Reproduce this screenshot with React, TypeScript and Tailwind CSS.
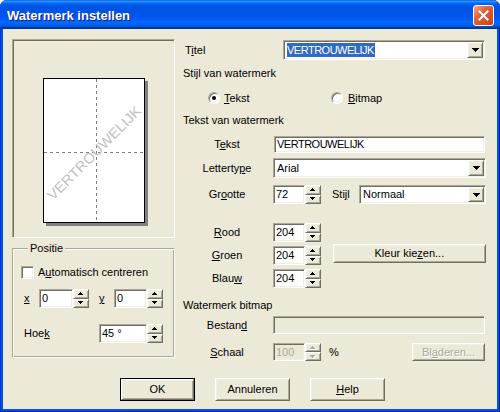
import React from "react";

const sunken =
  "border border-t-[#ACA899] border-l-[#ACA899] border-b-white border-r-white shadow-[inset_1px_1px_0_#716F64,inset_-1px_-1px_0_#F1EFE2]";
const raised =
  "border border-t-white border-l-white border-b-[#716F64] border-r-[#716F64] shadow-[inset_1px_1px_0_#F1EFE2,inset_-1px_-1px_0_#ACA899]";
const grayText = "text-[#ACA899] [text-shadow:1px_1px_0_#ffffff]";

function U({ children }) {
  return <span className="underline decoration-1 underline-offset-[1px]">{children}</span>;
}

function Tri({ rows, w, h, disabled = false }) {
  return (
    <svg width={w} height={h} viewBox={`0 0 ${w} ${h}`} shapeRendering="crispEdges">
      {disabled &&
        rows.map(([x, y, rw]) => (
          <rect key={"s" + y} x={x + 1} y={y + 1} width={rw} height={1} fill="#ffffff" />
        ))}
      {rows.map(([x, y, rw]) => (
        <rect key={y} x={x} y={y} width={rw} height={1} fill={disabled ? "#ACA899" : "#000000"} />
      ))}
    </svg>
  );
}

const upRows = [
  [2, 0, 1],
  [1, 1, 3],
  [0, 2, 5],
];
const downRows = [
  [0, 0, 5],
  [1, 1, 3],
  [2, 2, 1],
];
const comboRows = [
  [0, 0, 7],
  [1, 1, 5],
  [2, 2, 3],
  [3, 3, 1],
];

function Edit({ className = "", disabled = false, children = null }) {
  return (
    <div
      className={`${sunken} flex items-center pl-[2px] overflow-hidden whitespace-nowrap ${
        disabled ? "bg-[#ECE9D8] text-[#ACA899]" : "bg-white"
      } ${className}`}
    >
      {children}
    </div>
  );
}

function Spin({ disabled = false }) {
  return (
    <div className="flex flex-col w-[16px] h-full">
      <div className={`${raised} flex-1 bg-[#ECE9D8] flex items-center justify-center`}>
        <Tri rows={upRows} w={6} h={4} disabled={disabled} />
      </div>
      <div className={`${raised} flex-1 bg-[#ECE9D8] flex items-center justify-center`}>
        <Tri rows={downRows} w={6} h={4} disabled={disabled} />
      </div>
    </div>
  );
}

function Combo({ className = "", children }) {
  return (
    <div className={`${sunken} bg-white flex p-[1px] ${className}`}>
      <div className="flex-1 flex items-center pl-[2px] whitespace-nowrap overflow-hidden">{children}</div>
      <div className={`${raised} w-[16px] bg-[#ECE9D8] flex items-center justify-center`}>
        <Tri rows={comboRows} w={7} h={4} />
      </div>
    </div>
  );
}

function Btn({ className = "", children, def = false, disabled = false }) {
  const inner = (
    <div
      className={`${raised} w-full h-full bg-[#ECE9D8] flex items-center justify-center ${
        disabled ? grayText : ""
      }`}
    >
      {children}
    </div>
  );
  if (def) return <div className={`border border-black ${className}`}>{inner}</div>;
  return <div className={className}>{inner}</div>;
}

function Radio({ checked = false }) {
  return (
    <div
      className={`w-[12px] h-[12px] rounded-full bg-white ${sunken} flex items-center justify-center`}
    >
      {checked && <div className="w-[4px] h-[4px] rounded-full bg-black" />}
    </div>
  );
}

function Label({ children }) {
  return <div className="w-[88px] text-center">{children}</div>;
}

function Preview() {
  return (
    <div className="mt-[10px] h-[199px] border border-t-[#ACA899] border-l-[#ACA899] border-b-white border-r-white shadow-[inset_1px_1px_0_#716F64] flex justify-center pt-[38px]">
      <div className="w-[102px] h-[145px] border border-black bg-white shadow-[3px_3px_0_#808080]">
        <svg width="100" height="143" viewBox="0 0 100 143">
          <line x1="52.5" y1="0" x2="52.5" y2="143" stroke="#808080" strokeDasharray="3 3" />
          <line x1="0" y1="73.5" x2="100" y2="73.5" stroke="#808080" strokeDasharray="3 3" />
          <text
            x="50"
            y="74"
            transform="rotate(-45 50 74)"
            textAnchor="middle"
            dominantBaseline="central"
            fontFamily="Liberation Sans, Arial, sans-serif"
            fontSize="14"
            fill="#C0C0C0"
            textLength="126"
            lengthAdjust="spacingAndGlyphs"
          >
            VERTROUWELIJK
          </text>
        </svg>
      </div>
    </div>
  );
}

function Positie() {
  return (
    <fieldset className="mt-[4px] h-[116px] border border-t-[#ACA899] border-l-[#ACA899] border-r-white border-b-white shadow-[inset_1px_1px_0_#ffffff,inset_-1px_-1px_0_#ACA899] pl-[8px]">
      <legend className="ml-[7px] px-[2px] bg-[#ECE9D8] leading-[13px]">Positie</legend>
      <div className="mt-[11px] flex items-center gap-[4px] h-[13px]">
        <div className={`w-[13px] h-[13px] bg-white ${sunken}`} />
        <span>
          A<U>u</U>tomatisch centreren
        </span>
      </div>
      <div className="mt-[10px] flex items-center h-[19px]">
        <div className="ml-[3px] w-[15px]">
          <U>x</U>
        </div>
        <Edit className="w-[34px] h-full">0</Edit>
        <Spin />
        <div className="ml-[10px] w-[15px]">
          <U>y</U>
        </div>
        <Edit className="w-[33px] h-full">0</Edit>
        <Spin />
      </div>
      <div className="mt-[16px] flex items-center h-[19px]">
        <div className="ml-[3px] w-[75px]">
          Hoe<U>k</U>
        </div>
        <Edit className="w-[48px] h-full">45 °</Edit>
        <Spin />
      </div>
    </fieldset>
  );
}

function RightCol() {
  return (
    <div className="ml-[8px] w-[303px] flex flex-col">
      <div className="mt-[11px] h-[20px] flex items-center">
        <div className="pl-[2px] w-[100px]">
          T<U>i</U>tel
        </div>
        <Combo className="w-[202px] h-full">
          <span className="bg-[#316AC5] text-white h-[14px] leading-[14px] pr-[1px] tracking-[-0.5px]">
            VERTROUWELIJK
          </span>
        </Combo>
      </div>
      <div className="mt-[6px] h-[14px] flex items-center">Stijl van watermerk</div>
      <div className="mt-[11px] h-[14px] flex items-center pl-[25px]">
        <div className="w-[123px] flex items-center gap-[4px]">
          <Radio checked />
          <span>
            <U>T</U>ekst
          </span>
        </div>
        <div className="flex items-center gap-[5px]">
          <Radio />
          <span>
            <U>B</U>itmap
          </span>
        </div>
      </div>
      <div className="mt-[8px] h-[14px] flex items-center">Tekst van watermerk</div>
      <div className="mt-[9px] h-[17px] flex items-center">
        <Label>
          T<U>e</U>kst
        </Label>
        <Edit className="ml-[3px] w-[211px] h-full tracking-[-0.5px]">VERTROUWELIJK</Edit>
      </div>
      <div className="mt-[5px] h-[20px] flex items-center">
        <Label>
          Letterty<U>p</U>e
        </Label>
        <Combo className="ml-[2px] w-[213px] h-full">Arial</Combo>
      </div>
      <div className="mt-[7px] h-[19px] flex items-center">
        <Label>
          Gr<U>o</U>otte
        </Label>
        <Edit className="ml-[2px] w-[32px] h-full">72</Edit>
        <Spin />
        <div className="ml-[11px] w-[27px]">
          Sti<U>j</U>l
        </div>
        <Combo className="w-[127px] h-full">Normaal</Combo>
      </div>
      <div className="mt-[19px] h-[19px] flex items-center">
        <Label>
          <U>R</U>ood
        </Label>
        <Edit className="ml-[2px] w-[32px] h-full">204</Edit>
        <Spin />
      </div>
      <div className="mt-[4px] h-[19px] flex items-start">
        <div className="h-full flex items-center">
          <Label>
            <U>G</U>roen
          </Label>
        </div>
        <Edit className="ml-[2px] w-[32px] h-full">204</Edit>
        <Spin />
        <Btn className="ml-[12px] -mt-[2px] w-[154px] h-[19px]">
          Kleur kie<U>z</U>en...
        </Btn>
      </div>
      <div className="mt-[4px] h-[19px] flex items-center">
        <Label>
          Blau<U>w</U>
        </Label>
        <Edit className="ml-[2px] w-[32px] h-full">204</Edit>
        <Spin />
      </div>
      <div className="mt-[10px] h-[14px] flex items-center">Watermerk bitmap</div>
      <div className="mt-[4px] h-[18px] flex items-center">
        <Label>
          Bestan<U>d</U>
        </Label>
        <Edit className="ml-[2px] w-[212px] h-full" disabled />
      </div>
      <div className="mt-[9px] h-[18px] flex items-center">
        <Label>
          <U>S</U>chaal
        </Label>
        <Edit className="ml-[2px] w-[32px] h-full" disabled>
          100
        </Edit>
        <Spin disabled />
        <div className="ml-[8px]">%</div>
        <Btn className="ml-auto mr-[1px] w-[73px] h-full" disabled>
          Bl<U>a</U>deren...
        </Btn>
      </div>
    </div>
  );
}

function CloseButton() {
  return (
    <div className="ml-auto mr-[6px] w-[21px] h-[21px] rounded-[3px] border border-white bg-[linear-gradient(135deg,#F2A48A_0%,#E0603E_40%,#C8401C_100%)] flex items-center justify-center">
      <svg width="11" height="11" viewBox="0 0 11 11">
        <path d="M1.5 1.5 L9.5 9.5 M9.5 1.5 L1.5 9.5" stroke="#ffffff" strokeWidth="2" strokeLinecap="square" />
      </svg>
    </div>
  );
}

export default function App() {
  return (
    <div className="w-[500px] h-[412px] flex flex-col bg-[#0054E3] rounded-t-[7px] overflow-hidden font-['Liberation_Sans',Arial,sans-serif] shadow-[inset_1px_0_0_#0831D9,inset_-1px_0_0_#001EA0,inset_0_-1px_0_#001EA0]">
      <div className="h-[29px] flex items-center pt-[2px] bg-[linear-gradient(to_bottom,#0058EE_0%,#3593FF_4%,#288EFF_6%,#127DFF_8%,#036FFC_10%,#0262EE_14%,#0057E5_20%,#0054E3_24%,#0055EB_56%,#005BF5_66%,#026AFE_76%,#0062EF_86%,#0052D6_92%,#0040AB_94%,#003092_100%)]">
        <div className="pl-[7px] text-white font-bold text-[13px] leading-[16px] [text-shadow:1px_1px_0_#0A1883]">
          Watermerk instellen
        </div>
        <CloseButton />
      </div>
      <div className="flex-1 flex px-[3px] pb-[3px]">
        <div className="flex-1 flex flex-col bg-[#ECE9D8] text-[11px] leading-[13px] text-black">
          <div className="flex h-[338px]">
            <div className="ml-[9px] w-[163px] flex flex-col">
              <Preview />
              <Positie />
            </div>
            <RightCol />
          </div>
          <div className="flex mt-[11px] pl-[117px] gap-[20px]">
            <Btn def className="w-[75px] h-[23px]">
              OK
            </Btn>
            <Btn className="w-[75px] h-[23px]">Annuleren</Btn>
            <Btn className="w-[75px] h-[23px]">
              <U>H</U>elp
            </Btn>
          </div>
        </div>
      </div>
    </div>
  );
}
